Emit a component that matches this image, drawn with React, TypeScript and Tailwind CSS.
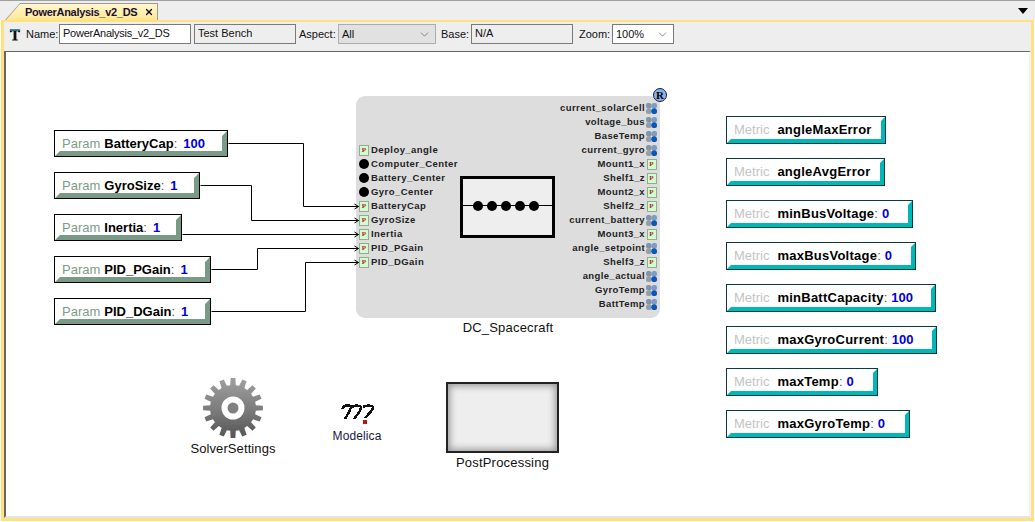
import { ChevronDown, X } from 'lucide-react';

const params = [
  { name: 'BatteryCap', value: '100', top: 130, width: 174 },
  { name: 'GyroSize', value: '1', top: 172, width: 146 },
  { name: 'Inertia', value: '1', top: 214, width: 128 },
  { name: 'PID_PGain', value: '1', top: 256, width: 157 },
  { name: 'PID_DGain', value: '1', top: 298, width: 157 },
];

const metrics = [
  { name: 'angleMaxError', top: 116, width: 160 },
  { name: 'angleAvgError', top: 158, width: 159 },
  { name: 'minBusVoltage', value: '0', top: 200, width: 187 },
  { name: 'maxBusVoltage', value: '0', top: 242, width: 190 },
  { name: 'minBattCapacity', value: '100', top: 284, width: 210 },
  { name: 'maxGyroCurrent', value: '100', top: 326, width: 211 },
  { name: 'maxTemp', value: '0', top: 368, width: 152 },
  { name: 'maxGyroTemp', value: '0', top: 410, width: 184 },
];

const leftPorts = [
  { name: 'Deploy_angle', kind: 'p' },
  { name: 'Computer_Center', kind: 'dot' },
  { name: 'Battery_Center', kind: 'dot' },
  { name: 'Gyro_Center', kind: 'dot' },
  { name: 'BatteryCap', kind: 'p' },
  { name: 'GyroSize', kind: 'p' },
  { name: 'Inertia', kind: 'p' },
  { name: 'PID_PGain', kind: 'p' },
  { name: 'PID_DGain', kind: 'p' },
];

const rightPorts = [
  { name: 'current_solarCell', kind: 'bus' },
  { name: 'voltage_bus', kind: 'bus' },
  { name: 'BaseTemp', kind: 'bus' },
  { name: 'current_gyro', kind: 'bus' },
  { name: 'Mount1_x', kind: 'p' },
  { name: 'Shelf1_z', kind: 'p' },
  { name: 'Mount2_x', kind: 'p' },
  { name: 'Shelf2_z', kind: 'p' },
  { name: 'current_battery', kind: 'bus' },
  { name: 'Mount3_x', kind: 'p' },
  { name: 'angle_setpoint', kind: 'bus' },
  { name: 'Shelf3_z', kind: 'p' },
  { name: 'angle_actual', kind: 'bus' },
  { name: 'GyroTemp', kind: 'bus' },
  { name: 'BattTemp', kind: 'bus' },
];

// canvas origin is x=6, y=52 in the window
const wires = [
  { d: 'M222 91H297V154H352', y: 154 },
  { d: 'M194 133H245V168H352', y: 168 },
  { d: 'M176 182H352', y: 182 },
  { d: 'M205 217H251V196H352', y: 196 },
  { d: 'M205 259H299V210H352', y: 210 },
];

function PortIcon({ kind }: { kind: string }) {
  if (kind === 'dot') return <div className="w-[10px] h-[10px] rounded-full bg-black" />;
  if (kind === 'bus')
    return (
      <svg width="11" height="11" viewBox="0 0 11 11">
        <circle cx="2.8" cy="2.8" r="2.9" fill="#8296aa" />
        <circle cx="8.2" cy="2.8" r="2.9" fill="#7f9cc4" />
        <circle cx="2.8" cy="8.2" r="2.9" fill="#949ea8" />
        <circle cx="8.2" cy="8.2" r="2.9" fill="#0b57b8" />
      </svg>
    );
  return (
    <div className="w-[10px] h-[11px] border border-[#8fae8f] bg-[#d4fbd0] flex items-center justify-center font-['Liberation_Serif',serif] text-[7px] font-bold leading-none text-[#a52a1a]">
      P
    </div>
  );
}

function Field({ value, width, gray, tight }: { value: string; width: string; gray?: boolean; tight?: boolean }) {
  return (
    <div className={`${width} h-[20px] border border-[#7a7a7a] px-[3px] leading-[16px] whitespace-nowrap ${tight ? 'tracking-[-0.25px]' : ''} ${gray ? 'bg-[#eeeeee]' : 'bg-white'}`}>
      {value}
    </div>
  );
}

function Select({ value, width, gray }: { value: string; width: string; gray?: boolean }) {
  return (
    <div className={`${width} h-[20px] border flex items-center justify-between pl-[3px] pr-[4px] ${gray ? 'border-[#adadad] bg-[#e1e1e1]' : 'border-[#7a7a7a] bg-white'}`}>
      <span>{value}</span>
      <ChevronDown className="w-[13px] h-[13px] text-[#555555]" strokeWidth={1.2} />
    </div>
  );
}

export default function App() {
  return (
    <div className="w-[1035px] h-[522px] overflow-hidden flex flex-col bg-white font-['Liberation_Sans',Arial,sans-serif] text-[11px] text-[#111111]">
      {/* tab strip */}
      <div className="h-[20px] border-t border-[#a0a0a0] bg-[#eeeeee] flex items-end justify-between shrink-0 relative">
        <div className="ml-[5px] w-[153px] h-[17px] bg-[#9a9a9a] [clip-path:polygon(15px_0,100%_0,100%_100%,0_100%)]">
          <div className="w-full h-full pl-[20px] pt-px pr-[1px] flex items-center gap-[7px] bg-gradient-to-b from-[#fff7d2] to-[#ffe78f] font-bold tracking-[-0.3px] text-[#1a1030] [clip-path:polygon(15px_1px,calc(100%-1px)_1px,calc(100%-1px)_100%,1px_100%)]">
            <span className="whitespace-nowrap">PowerAnalysis_v2_DS</span>
            <X className="w-[10px] h-[10px] text-black shrink-0" strokeWidth={3} />
          </div>
        </div>
        <div className="absolute right-[7px] top-[7px] w-0 h-0 border-x-[5px] border-t-[6px] border-x-transparent border-t-black" />
      </div>

      {/* document frame */}
      <div className="flex-1 flex flex-col border-x-[3px] border-t-2 border-b-[3px] border-[#ffe27e] ml-px mr-px mb-px min-h-0">
        <div className="h-[29px] bg-[#eeeeee] flex items-start pt-[2px] pl-[5px] gap-[3px] shrink-0 leading-[20px]">
          <svg width="12" height="13" viewBox="0 0 13 13" className="mr-[2px] mt-[4px]">
            <path d="M1 1H12V4H10.5L9.5 3H8V12H9.5V13H3.5V12H5V3H3.5L2.5 4H1Z" fill="#111111" />
            <path d="M1 1H12V2.5H1Z" fill="#2c8aa0" />
          </svg>
          <span className="w-[30px]">Name:</span>
          <Field value="PowerAnalysis_v2_DS" width="w-[132px]" tight />
          <Field value="Test Bench" width="w-[102px]" gray />
          <span className="w-[36px]">Aspect:</span>
          <Select value="All" width="w-[98px]" gray />
          <span className="w-[27px] ml-[2px]">Base:</span>
          <Field value="N/A" width="w-[102px]" gray />
          <span className="w-[30px] ml-[3px]">Zoom:</span>
          <Select value="100%" width="w-[62px]" />
        </div>

        {/* model canvas */}
        <div className="flex-1 relative bg-white border-t border-l-2 border-[#666666] border-b-2 border-b-[#e4e4e4] border-r-2 border-r-[#f4f4f4] text-[#111111]">
          {params.map((p) => (
            <div
              key={p.name}
              className="absolute h-[27px] border border-black bg-[#7a9a88]"
              style={{ left: 48, top: p.top - 52, width: p.width }}
            >
              <div className="w-full h-full bg-white flex items-center pl-[7px] text-[13px] whitespace-nowrap [clip-path:polygon(0_0,100%_0,calc(100%-5px)_5px,calc(100%-5px)_calc(100%-5px),5px_calc(100%-5px),0_100%)]">
                <span className="text-[#7d9d87] mr-[4px]">Param</span>
                <span className="font-bold text-black">{p.name}</span>
                <span className="text-[#555555] mr-[6px]">:</span>
                <span className="font-bold text-[#0000e0]">{p.value}</span>
              </div>
            </div>
          ))}

          {/* DC_Spacecraft block */}
          <div className="absolute left-[350px] top-[44px] w-[304px] h-[222px] rounded-[9px] bg-[#dddddd]">
            <div className="absolute left-[3px] top-[47px] flex flex-col">
              {leftPorts.map((p) => (
                <div key={p.name} className="h-[14px] flex items-center gap-[2px] text-[9.5px] font-bold tracking-[0.45px] whitespace-nowrap text-[#222222]">
                  <div className="w-[10px] flex justify-center">
                    <PortIcon kind={p.kind} />
                  </div>
                  <span>{p.name}</span>
                </div>
              ))}
            </div>
            <div className="absolute right-[3px] top-[5px] flex flex-col items-end">
              {rightPorts.map((p) => (
                <div key={p.name} className="h-[14px] flex items-center gap-[1px] text-[9.5px] font-bold tracking-[0.4px] whitespace-nowrap text-[#222222]">
                  <span>{p.name}</span>
                  <div className="w-[11px] flex justify-center">
                    <PortIcon kind={p.kind} />
                  </div>
                </div>
              ))}
            </div>
            <div className="absolute left-[104px] top-[80px] w-[95px] h-[62px] border-[3px] border-black bg-[#eeeeee] flex items-center justify-center pb-[2px] pr-[4px]">
              <div className="absolute left-0 right-0 top-[26px] h-px bg-black" />
              <div className="flex gap-[4px] relative">
                {[0, 1, 2, 3, 4].map((i) => (
                  <div key={i} className="w-[10px] h-[10px] rounded-full bg-black" />
                ))}
              </div>
            </div>
            <div className="absolute right-[-7px] top-[-8px] w-[14px] h-[14px] rounded-full border border-[#10204a] bg-[#8db0e8] flex items-center justify-center font-['Liberation_Serif',serif] font-bold text-[11px] leading-none text-black">
              R
            </div>
          </div>
          <div className="absolute left-[350px] top-[266px] w-[304px] text-center text-[13px] tracking-[0.2px]">DC_Spacecraft</div>

          {/* connections */}
          <svg width="360" height="280" className="absolute left-0 top-0" fill="none">
            {wires.map((w) => (
              <g key={w.d} transform="translate(0.5 0.5)">
                <path d={w.d} stroke="#000000" strokeWidth="1" />
                <path d={`M348 ${w.y - 2.5}L352 ${w.y}L348 ${w.y + 2.5}`} stroke="#000000" strokeWidth="1" />
              </g>
            ))}
          </svg>

          {metrics.map((m) => (
            <div
              key={m.name}
              className="absolute h-[28px] border border-[#0a3a3a] bg-[#00b8b8]"
              style={{ left: 720, top: m.top - 52, width: m.width }}
            >
              <div className="w-full h-full bg-white flex items-center pl-[7px] text-[13px] whitespace-nowrap [clip-path:polygon(0_0,100%_0,calc(100%-4px)_4px,calc(100%-4px)_calc(100%-4px),4px_calc(100%-4px),0_100%)]">
                <span className="text-[#c4c4c4] mr-[8px]">Metric</span>
                <span className="font-bold text-black tracking-[0.25px]">{m.name}</span>
                {m.value && (
                  <>
                    <span className="text-[#555555] mr-[4px]">:</span>
                    <span className="font-bold text-[#0000e0]">{m.value}</span>
                  </>
                )}
              </div>
            </div>
          ))}

          {/* solver gear */}
          <svg width="62" height="62" viewBox="-31 -31 62 62" className="absolute left-[196px] top-[325px]">
            <defs>
              <linearGradient id="gearFill" x1="0" y1="0" x2="0" y2="1">
                <stop offset="0" stopColor="#a0a0a0" />
                <stop offset="0.5" stopColor="#7e7e7e" />
                <stop offset="1" stopColor="#555555" />
              </linearGradient>
            </defs>
            <path
              fill="url(#gearFill)"
              fillRule="evenodd"
              d={
                Array.from({ length: 16 }, (_, i) => {
                  const pt = (r: number, a: number) => {
                    const t = ((i * 22.5 + a) * Math.PI) / 180;
                    return `${(r * Math.sin(t)).toFixed(2)} ${(-r * Math.cos(t)).toFixed(2)}`;
                  };
                  return `${i === 0 ? 'M' : 'L'}${pt(23, -7)}L${pt(30, -4.5)}L${pt(30, 4.5)}L${pt(23, 7)}`;
                }).join('') + 'Z'
              }
            />
            <circle r="11.5" fill="#ffffff" />
            <circle r="5.5" fill="#808080" />
          </svg>
          <div className="absolute left-[165px] top-[387px] w-[124px] text-center text-[13px] tracking-[0.1px]">SolverSettings</div>

          {/* modelica mark */}
          <svg width="36" height="22" viewBox="0 0 36 22" className="absolute left-[334px] top-[351px]" fill="none" stroke="#111111" strokeWidth="2.4" shapeRendering="crispEdges">
            <path d="M2 6C4 2 8 2 11 3C11 7 8 11 5 16" />
            <path d="M12 4C15 2 19 2 21 4C21 8 18 11 14 16" />
            <path d="M23 4C26 2 31 2 33 4C33 8 29 10 25 15" />
            <rect x="23" y="17" width="4" height="4" fill="#c01010" stroke="none" />
          </svg>
          <div className="absolute left-[316px] top-[375px] w-[70px] text-center text-[12px] tracking-[0.1px] text-[#1a1a40]">Modelica</div>

          {/* post processing block */}
          <div className="absolute left-[440px] top-[330px] w-[113px] h-[71px] border-2 border-[#222222] bg-[#eeeeee] shadow-[inset_0_0_7px_2px_#999999]" />
          <div className="absolute left-[440px] top-[401px] w-[113px] text-center text-[13px] tracking-[0.2px]">PostProcessing</div>
        </div>
      </div>
    </div>
  );
}
